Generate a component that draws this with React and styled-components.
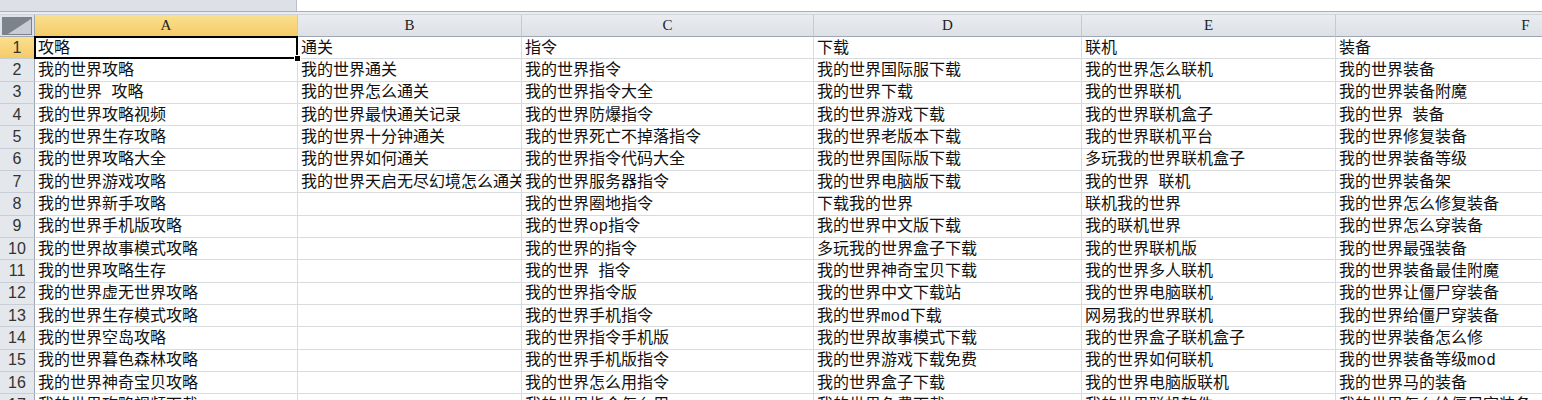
import React from 'react'
import styled, { createGlobalStyle } from 'styled-components'

const GlobalStyle = createGlobalStyle`
  html, body { margin: 0; padding: 0; background: #fff; }
  body { font-family: "Liberation Serif", "Noto Sans CJK SC", serif; }
`

const COLS = [
  { key: 'A', width: 263 },
  { key: 'B', width: 224 },
  { key: 'C', width: 292 },
  { key: 'D', width: 268 },
  { key: 'E', width: 254 },
  { key: 'F', width: 380 },
]

const ROWS = [
  ['攻略', '通关', '指令', '下载', '联机', '装备'],
  ['我的世界攻略', '我的世界通关', '我的世界指令', '我的世界国际服下载', '我的世界怎么联机', '我的世界装备'],
  ['我的世界 攻略', '我的世界怎么通关', '我的世界指令大全', '我的世界下载', '我的世界联机', '我的世界装备附魔'],
  ['我的世界攻略视频', '我的世界最快通关记录', '我的世界防爆指令', '我的世界游戏下载', '我的世界联机盒子', '我的世界 装备'],
  ['我的世界生存攻略', '我的世界十分钟通关', '我的世界死亡不掉落指令', '我的世界老版本下载', '我的世界联机平台', '我的世界修复装备'],
  ['我的世界攻略大全', '我的世界如何通关', '我的世界指令代码大全', '我的世界国际版下载', '多玩我的世界联机盒子', '我的世界装备等级'],
  ['我的世界游戏攻略', '我的世界天启无尽幻境怎么通关', '我的世界服务器指令', '我的世界电脑版下载', '我的世界 联机', '我的世界装备架'],
  ['我的世界新手攻略', '', '我的世界圈地指令', '下载我的世界', '联机我的世界', '我的世界怎么修复装备'],
  ['我的世界手机版攻略', '', '我的世界op指令', '我的世界中文版下载', '我的联机世界', '我的世界怎么穿装备'],
  ['我的世界故事模式攻略', '', '我的世界的指令', '多玩我的世界盒子下载', '我的世界联机版', '我的世界最强装备'],
  ['我的世界攻略生存', '', '我的世界 指令', '我的世界神奇宝贝下载', '我的世界多人联机', '我的世界装备最佳附魔'],
  ['我的世界虚无世界攻略', '', '我的世界指令版', '我的世界中文下载站', '我的世界电脑联机', '我的世界让僵尸穿装备'],
  ['我的世界生存模式攻略', '', '我的世界手机指令', '我的世界mod下载', '网易我的世界联机', '我的世界给僵尸穿装备'],
  ['我的世界空岛攻略', '', '我的世界指令手机版', '我的世界故事模式下载', '我的世界盒子联机盒子', '我的世界装备怎么修'],
  ['我的世界暮色森林攻略', '', '我的世界手机版指令', '我的世界游戏下载免费', '我的世界如何联机', '我的世界装备等级mod'],
  ['我的世界神奇宝贝攻略', '', '我的世界怎么用指令', '我的世界盒子下载', '我的世界电脑版联机', '我的世界马的装备'],
  ['我的世界攻略视频下载', '', '我的世界指令怎么用', '我的世界免费下载', '我的世界联机软件', '我的世界怎么给僵尸穿装备'],
]

const ROW_H = 22.33

const Sheet = styled.div`
  width: 1542px;
  height: 400px;
  overflow: hidden;
  background: #fff;
`

const TopBar = styled.div`
  display: flex;
  height: 11px;
  border-bottom: 1px solid #a7afba;
`

const NameBox = styled.div`
  width: 296px;
  background: #dde1e7;
  border-right: 1px solid #b9c0ca;
`

const FormulaBox = styled.div`
  flex: 1;
  background: #fff;
`

const Gap = styled.div`
  height: 2px;
  background: #e9ecf0;
  border-bottom: 1px solid #d0d5dc;
`

const Grid = styled.div`
  display: grid;
  grid-template-columns: 35px ${COLS.map(c => c.width + 'px').join(' ')};
  grid-template-rows: 22px;
  grid-auto-rows: ${ROW_H}px;
  width: max-content;
`

const Corner = styled.div`
  box-sizing: border-box;
  background: #dfe3e8;
  border-right: 1px solid #9ea7b3;
  border-bottom: 1px solid #9ea7b3;
  display: flex;
  align-items: center;
  justify-content: center;
`

const ColHead = styled.div`
  box-sizing: border-box;
  display: flex;
  align-items: center;
  justify-content: center;
  font-family: "Liberation Serif", "Noto Sans CJK SC", serif;
  font-size: 15px;
  color: #222;
  border-right: 1px solid #c4cad3;
  border-bottom: 1px solid #9ea7b3;
  background: ${p => (p.$active
    ? 'linear-gradient(#fae08e, #f5cb68)'
    : 'linear-gradient(#e9ecf0, #dde1e6)')};
`

const RowHead = styled.div`
  box-sizing: border-box;
  display: flex;
  align-items: center;
  justify-content: center;
  font-family: "Liberation Sans", sans-serif;
  font-size: 16px;
  color: #333;
  border-right: 1px solid #9ea7b3;
  border-bottom: 1px solid #c9ced6;
  background: ${p => (p.$active
    ? 'linear-gradient(#fae08e, #f5cb68)'
    : '#e4e7eb')};
`

const Cell = styled.div`
  position: relative;
  box-sizing: border-box;
  display: flex;
  align-items: center;
  padding-left: 3px;
  white-space: nowrap;
  overflow: ${p => (p.$selected ? 'visible' : 'hidden')};
  font-family: "Liberation Mono", "Noto Sans CJK SC", sans-serif;
  font-size: 16px;
  color: #111;
  border-right: 1px solid #d9dcdf;
  border-bottom: 1px solid #d9dcdf;
  z-index: ${p => (p.$selected ? 2 : 'auto')};

  ${p => p.$selected && `
    &::after {
      content: '';
      position: absolute;
      left: -1px;
      top: -1px;
      right: -1px;
      bottom: -1px;
      border: 2px solid #000;
      pointer-events: none;
    }
    &::before {
      content: '';
      position: absolute;
      right: -4px;
      bottom: -4px;
      width: 5px;
      height: 5px;
      background: #000;
      border: 1px solid #fff;
      z-index: 3;
    }
  `}
`

const CellText = styled.span`
  line-height: 1;
  transform: translateY(1px);
`

function CornerMark() {
  return (
    <svg width="30" height="18" viewBox="0 0 30 18">
      <rect x="0" y="0" width="30" height="18" fill="#7d838b" />
      <polygon points="29,2 29,17 6,17" fill="#c9cdd3" />
    </svg>
  )
}

export default function App() {
  return (
    <>
      <GlobalStyle />
      <Sheet>
        <TopBar>
          <NameBox />
          <FormulaBox />
        </TopBar>
        <Gap />
        <Grid>
          <Corner><CornerMark /></Corner>
          {COLS.map((c, i) => (
            <ColHead key={c.key} $active={i === 0}>{c.key}</ColHead>
          ))}
          {ROWS.map((row, r) => (
            <React.Fragment key={r}>
              <RowHead $active={r === 0}>{r + 1}</RowHead>
              {row.map((text, c) => (
                <Cell key={c} $selected={r === 0 && c === 0}>
                  <CellText>{text}</CellText>
                </Cell>
              ))}
            </React.Fragment>
          ))}
        </Grid>
      </Sheet>
    </>
  )
}
